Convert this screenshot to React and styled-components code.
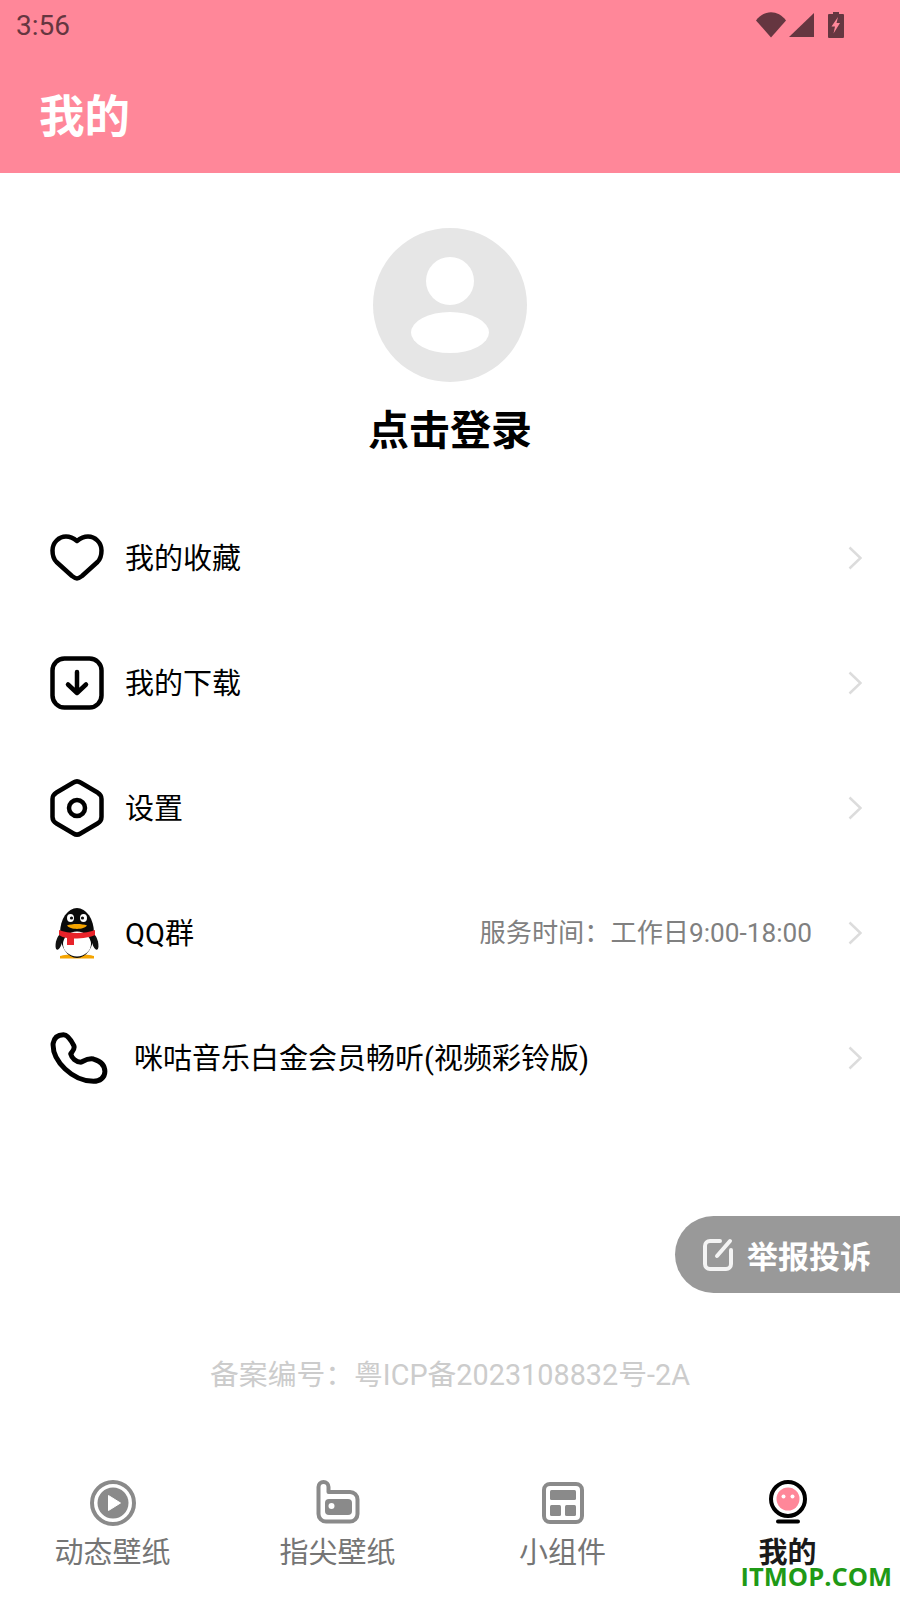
import React from "react";
import styled, { createGlobalStyle } from "styled-components";

const GlobalStyle = createGlobalStyle`
  html, body {
    margin: 0;
    padding: 0;
    background: #fff;
  }
  body {
    font-family: Roboto, "Noto Sans CJK SC", sans-serif;
  }
`;

const Page = styled.div`
  position: relative;
  width: 900px;
  height: 1600px;
  display: flex;
  flex-direction: column;
  overflow: hidden;
  background: #fff;
`;

const Header = styled.header`
  height: 173px;
  background: #ff8799;
  display: flex;
  flex-direction: column;
`;

const StatusBar = styled.div`
  height: 50px;
  display: flex;
  align-items: center;
  justify-content: space-between;
  padding: 0 56px 0 16px;
  color: #653640;
  font-size: 28px;
`;

const StatusIcons = styled.div`
  display: flex;
  align-items: center;
`;

const Title = styled.h1`
  margin: 0;
  padding: 0 0 0 39px;
  height: 123px;
  line-height: 136px;
  font-size: 45.5px;
  font-weight: 700;
  color: #fff;
`;

const Profile = styled.section`
  display: flex;
  flex-direction: column;
  align-items: center;
  padding-top: 55px;
`;

const Avatar = styled.div`
  position: relative;
  width: 154px;
  height: 154px;
  border-radius: 50%;
  background: #e6e6e6;
`;

const AvatarHead = styled.div`
  position: absolute;
  left: 53px;
  top: 29px;
  width: 48px;
  height: 48px;
  border-radius: 50%;
  background: #fff;
`;

const AvatarBody = styled.div`
  position: absolute;
  left: 38px;
  top: 84px;
  width: 78px;
  height: 41px;
  border-radius: 50%;
  background: #fff;
`;

const LoginText = styled.div`
  margin-top: 20px;
  height: 58px;
  line-height: 58px;
  font-size: 41px;
  font-weight: 700;
  color: #000;
`;

const Menu = styled.nav`
  margin-top: 33px;
  display: flex;
  flex-direction: column;
`;

const Row = styled.div`
  height: 125px;
  box-sizing: border-box;
  display: flex;
  align-items: center;
  padding: 4px 38px 0 50px;
`;

const RowIcon = styled.div`
  width: 54px;
  height: 60px;
  display: flex;
  align-items: center;
  justify-content: center;
  flex: none;
`;

const RowLabel = styled.span`
  margin: 0 0 4px ${(p) => p.$indent}px;
  font-size: 29px;
  color: #000;
  flex: 1;
`;

const RowHint = styled.span`
  margin: 0 36px 4px 0;
  font-size: 26.200px;
  color: #808080;
`;

const Report = styled.div`
  margin-top: 98px;
  margin-left: auto;
  width: 225px;
  height: 77px;
  border-radius: 38.5px 0 0 38.5px;
  background: #999;
  display: flex;
  align-items: center;
  padding-left: 28px;
  box-sizing: border-box;
  gap: 14px;
  color: #fff;
  font-size: 31px;
  font-weight: 700;
`;

const Record = styled.div`
  margin-top: 62px;
  text-align: center;
  font-size: 28.800px;
  line-height: 40px;
  color: #ccc;
`;

const TabBar = styled.footer`
  margin-top: auto;
  height: 120px;
  display: grid;
  grid-template-columns: repeat(4, 1fr);
`;

const Tab = styled.div`
  display: flex;
  flex-direction: column;
  align-items: center;
`;

const TabIcon = styled.div`
  height: 51px;
  display: flex;
  align-items: flex-start;
  justify-content: center;
`;

const TabLabel = styled.span`
  font-size: 29px;
  line-height: 44px;
  color: ${(p) => (p.$active ? "#1a1a1a" : "#757575")};
  font-weight: ${(p) => (p.$active ? 700 : 400)};
`;

const Watermark = styled.div`
  position: absolute;
  right: 8px;
  bottom: 9px;
  font-family: "Open Sans", sans-serif;
  font-size: 25.500px;
  line-height: 30px;
  font-weight: 700;
  color: #1f9a16;
`;

const WifiIcon = () => (
  <svg width="30" height="26" viewBox="0 0 30 26">
    <path d="M0 8.5C8-2.5 22-2.5 30 8.5L15 25.5Z" fill="#653640" />
  </svg>
);

const SignalIcon = () => (
  <svg width="25" height="24" viewBox="0 0 25 24" style={{ marginLeft: 3 }}>
    <path d="M25 0V24H0Z" fill="#653640" />
  </svg>
);

const BatteryIcon = () => (
  <svg width="16" height="26" viewBox="0 0 16 26" style={{ marginLeft: 14 }}>
    <path d="M5 0h6v2h4a1 1 0 0 1 1 1v22a1 1 0 0 1-1 1H1a1 1 0 0 1-1-1V3a1 1 0 0 1 1-1h4Z" fill="#653640" />
    <path d="M10 5 3.500 14.500h3.500l-1.500 7 6.500-10.500h-3.500Z" fill="#ff8799" />
  </svg>
);

const HeartIcon = () => (
  <svg width="54" height="47" viewBox="0 0 54 47" fill="none">
    <path
      d="M27 44.500C25.500 44.500 24 43.500 22 42L6.500 28C3 24.500 2.500 20 2.500 16.500 2.500 8.500 9 2.500 16 2.500 20.500 2.500 24 4.500 27 7 30 4.500 33.500 2.500 38 2.500 45 2.500 51.500 8.500 51.500 16.500 51.500 20 51 24.500 47.500 28L32 42C30 43.500 28.500 44.500 27 44.500Z"
      stroke="#000"
      strokeWidth="4.500"
      strokeLinejoin="round"
    />
  </svg>
);

const DownloadIcon = () => (
  <svg width="54" height="54" viewBox="0 0 54 54" fill="none" stroke="#000" strokeWidth="4.500" strokeLinecap="round" strokeLinejoin="round">
    <rect x="2.500" y="2.500" width="49" height="49" rx="12" />
    <path d="M27 16V37M18 28.500 27 37 36 28.500" />
  </svg>
);

const SettingsIcon = () => (
  <svg width="54" height="58" viewBox="0 0 54 58" fill="none" stroke="#000" strokeWidth="4.500" strokeLinejoin="round">
    <path d="M23.500 3.500C25.500 2.200 28.500 2.200 30.500 3.500L47.500 13.500C50 15 51.500 17 51.500 20V38C51.500 41 50 43 47.500 44.500L30.500 54.500C28.500 55.800 25.500 55.800 23.500 54.500L6.500 44.500C4 43 2.500 41 2.500 38V20C2.500 17 4 15 6.500 13.500Z" />
    <circle cx="27" cy="29" r="8" />
  </svg>
);

const QQIcon = () => (
  <svg width="46" height="52" viewBox="0 0 46 52">
    <path d="M6 49C12 46.500 34 46.500 40 49V51.500H6Z" fill="#f5a400" />
    <ellipse cx="5" cy="35" rx="3" ry="8" fill="#111" transform="rotate(14 5 35)" />
    <ellipse cx="41" cy="35" rx="3" ry="8" fill="#111" transform="rotate(-14 41 35)" />
    <ellipse cx="23" cy="26" rx="17" ry="25" fill="#0a0a0a" />
    <ellipse cx="23" cy="37" rx="14" ry="12.500" fill="#fff" />
    <ellipse cx="16.500" cy="11" rx="3.500" ry="4" fill="#fff" />
    <ellipse cx="29.500" cy="11" rx="3.500" ry="4" fill="#fff" />
    <circle cx="17.500" cy="11" r="1.600" fill="#111" />
    <circle cx="28.500" cy="11" r="1.600" fill="#111" />
    <path d="M13 18.500C18 16.500 28 16.500 33 18.500 30 23 16 23 13 18.500Z" fill="#f5a400" />
    <path d="M5 23C14 27 32 27 41 23L41 28C37 30 29 31.500 20 31.500V38H13V31C10 30.500 7 29.500 5 28Z" fill="#e8232a" />
  </svg>
);

const PhoneIcon = () => (
  <svg width="58" height="54" viewBox="0 0 56 50" fill="none" style={{ marginLeft: 4, flex: "none" }}>
    <path
      d="M3 11C4 5 8 2.500 13 2.500 17 2.500 20 7 23 13 24.500 17 21 19 20 21 21 25 25 29 30 29 34 27 37 25 42 26 49 28 53 32 53 38 53 44 48 47.500 42 47.500 22 47.500 2 28 3 11Z"
      stroke="#000"
      strokeWidth="4.800"
      strokeLinejoin="round"
    />
  </svg>
);

const Chevron = () => (
  <svg width="14" height="24" viewBox="0 0 14 24" fill="none">
    <path d="M1.500 1.500 12.500 12 1.500 22.500" stroke="#dcdcdc" strokeWidth="2.500" />
  </svg>
);

const ReportIcon = () => (
  <svg width="30" height="33" viewBox="0 0 30 33" fill="none" stroke="#f4f4f4" strokeWidth="4" strokeLinecap="round" strokeLinejoin="round">
    <path d="M17 3H7A5 5 0 0 0 2 8V26A5 5 0 0 0 7 31H23A5 5 0 0 0 28 26V12" />
    <path d="M14 18 27 3" />
  </svg>
);

const PlayTabIcon = () => (
  <svg width="46" height="46" viewBox="0 0 46 46">
    <circle cx="23" cy="23" r="21" fill="none" stroke="#8a8a8a" strokeWidth="4" />
    <circle cx="23" cy="23" r="15.500" fill="#8a8a8a" />
    <path d="M18.500 15.500 30.500 23 18.500 30.500Z" fill="#fff" stroke="#fff" strokeWidth="1" strokeLinejoin="round" />
  </svg>
);

const FingerTabIcon = () => (
  <svg width="44" height="44" viewBox="0 0 44 44">
    <path d="M2.500 7A5 5 0 0 1 12.500 7V12H34A7.500 7.500 0 0 1 41.500 19.500V34A7.500 7.500 0 0 1 34 41.500H10A7.500 7.500 0 0 1 2.500 34Z" fill="none" stroke="#8a8a8a" strokeWidth="4" strokeLinejoin="round" />
    <rect x="9" y="19" width="27" height="16" rx="4" fill="#8a8a8a" />
    <circle cx="15.500" cy="26" r="3" fill="#fff" />
  </svg>
);

const WidgetTabIcon = () => (
  <svg width="42" height="42" viewBox="0 0 42 42" style={{ marginTop: 2 }}>
    <rect x="2" y="2" width="38" height="38" rx="6" fill="none" stroke="#8a8a8a" strokeWidth="4" />
    <rect x="8" y="8" width="26" height="10" rx="1.500" fill="#8a8a8a" />
    <rect x="8" y="23" width="11" height="11" rx="1.500" fill="#8a8a8a" />
    <rect x="23" y="23" width="11" height="11" rx="1.500" fill="#8a8a8a" />
  </svg>
);

const MineTabIcon = () => (
  <svg width="38" height="44" viewBox="0 0 38 44">
    <circle cx="19" cy="19" r="17" fill="#fff" stroke="#000" strokeWidth="4" />
    <circle cx="19" cy="19" r="11.500" fill="#ff8799" />
    <circle cx="14.500" cy="16.500" r="2" fill="#fff" />
    <circle cx="23.500" cy="16.500" r="2" fill="#fff" />
    <rect x="7" y="39.500" width="24" height="4" rx="2" fill="#000" />
  </svg>
);

const menuItems = [
  { icon: <HeartIcon />, label: "我的收藏", indent: 21 },
  { icon: <DownloadIcon />, label: "我的下载", indent: 21 },
  { icon: <SettingsIcon />, label: "设置", indent: 21 },
  { icon: <QQIcon />, label: "QQ群", hint: "服务时间：工作日9:00-18:00", indent: 21 },
  { icon: <PhoneIcon />, label: "咪咕音乐白金会员畅听(视频彩铃版)", indent: 30 },
];

const tabs = [
  { icon: <PlayTabIcon />, label: "动态壁纸" },
  { icon: <FingerTabIcon />, label: "指尖壁纸" },
  { icon: <WidgetTabIcon />, label: "小组件" },
  { icon: <MineTabIcon />, label: "我的", active: true },
];

export default function App() {
  return (
    <Page>
      <GlobalStyle />
      <Header>
        <StatusBar>
          <span>3:56</span>
          <StatusIcons>
            <WifiIcon />
            <SignalIcon />
            <BatteryIcon />
          </StatusIcons>
        </StatusBar>
        <Title>我的</Title>
      </Header>
      <Profile>
        <Avatar>
          <AvatarHead />
          <AvatarBody />
        </Avatar>
        <LoginText>点击登录</LoginText>
      </Profile>
      <Menu>
        {menuItems.map((item) => (
          <Row key={item.label}>
            <RowIcon>{item.icon}</RowIcon>
            <RowLabel $indent={item.indent}>{item.label}</RowLabel>
            {item.hint && <RowHint>{item.hint}</RowHint>}
            <Chevron />
          </Row>
        ))}
      </Menu>
      <Report>
        <ReportIcon />
        <span>举报投诉</span>
      </Report>
      <Record>备案编号：粤ICP备2023108832号-2A</Record>
      <TabBar>
        {tabs.map((tab) => (
          <Tab key={tab.label}>
            <TabIcon>{tab.icon}</TabIcon>
            <TabLabel $active={tab.active}>{tab.label}</TabLabel>
          </Tab>
        ))}
      </TabBar>
      <Watermark>ITMOP.COM</Watermark>
    </Page>
  );
}
